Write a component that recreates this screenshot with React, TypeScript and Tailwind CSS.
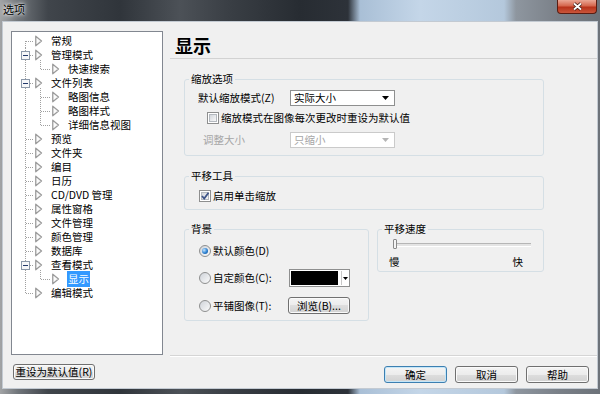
type Node = {
  label: string
  level: 0 | 1
  expand?: boolean
  first?: boolean
  last?: boolean
  lastChild?: boolean
  selected?: boolean
}

const nodes: Node[] = [
  { label: '常规', level: 0, first: true },
  { label: '管理模式', level: 0, expand: true },
  { label: '快速搜索', level: 1, lastChild: true },
  { label: '文件列表', level: 0, expand: true },
  { label: '略图信息', level: 1 },
  { label: '略图样式', level: 1 },
  { label: '详细信息视图', level: 1, lastChild: true },
  { label: '预览', level: 0 },
  { label: '文件夹', level: 0 },
  { label: '编目', level: 0 },
  { label: '日历', level: 0 },
  { label: 'CD/DVD 管理', level: 0 },
  { label: '属性窗格', level: 0 },
  { label: '文件管理', level: 0 },
  { label: '颜色管理', level: 0 },
  { label: '数据库', level: 0 },
  { label: '查看模式', level: 0, expand: true },
  { label: '显示', level: 1, lastChild: true, selected: true },
  { label: '编辑模式', level: 0, last: true },
]

const dot = { stroke: '#a0a0a0', strokeWidth: 1, strokeDasharray: '1 1' }

function Gutter({ n }: { n: Node }) {
  const w = n.level === 0 ? 39 : 56
  const tx = n.level === 0 ? 23 : 40
  return (
    <svg width={w} height={14} className="shrink-0">
      <line x1={13.5} x2={13.5} y1={n.first ? 7 : 0} y2={n.last ? 8 : 14} {...dot} />
      {n.level === 0 ? (
        <line x1={14} x2={22} y1={7.5} y2={7.5} {...dot} />
      ) : (
        <>
          <line x1={28.5} x2={28.5} y1={0} y2={n.lastChild ? 8 : 14} {...dot} />
          <line x1={29} x2={39} y1={7.5} y2={7.5} {...dot} />
        </>
      )}
      {n.expand && (
        <>
          <line x1={28.5} x2={28.5} y1={12} y2={14} {...dot} />
          <rect x={9.5} y={3.5} width={8} height={8} fill="#f6f7f9" stroke="#8b98a9" />
          <line x1={11} x2={16} y1={7.5} y2={7.5} stroke="#22386a" />
        </>
      )}
      <path
        d={`M${tx + 0.75} 2.25 L${tx + 0.75} 11.75 L${tx + 6.5} 7 Z`}
        fill="#fbfbfb"
        stroke="#9c9c9c"
        strokeWidth={1.3}
        strokeLinejoin="round"
      />
    </svg>
  )
}

function Tree() {
  return (
    <div className="h-[324px] w-[152px] border border-[#828790] bg-white pt-[2px]">
      {nodes.map((n) => (
        <div key={n.label} className="flex h-[14px] items-center">
          <Gutter n={n} />
          {n.selected ? (
            <span className="-ml-[1px] bg-[#3399ff] px-[1px] text-white">{n.label}</span>
          ) : (
            <span className="whitespace-nowrap">{n.label}</span>
          )}
        </div>
      ))}
    </div>
  )
}

function Group({ title, className, children }: { title: string; className?: string; children: React.ReactNode }) {
  return (
    <fieldset className={`rounded-[3px] border border-[#d5dfe5] ${className ?? ''}`}>
      <legend className="ml-[4px] px-[2px] leading-[14px]">{title}</legend>
      {children}
    </fieldset>
  )
}

function Combo({ value, disabled }: { value: string; disabled?: boolean }) {
  return (
    <div
      className={`flex h-[16px] w-[105px] items-center border bg-white pl-[3px] pr-[5px] ${
        disabled ? 'border-[#cacaca] text-[#a6a6a6]' : 'border-[#8e8f8f]'
      }`}
    >
      <span className="flex-1 leading-[14px]">{value}</span>
      <svg width="7" height="4">
        <path d="M0 0h7L3.5 4z" fill={disabled ? '#b5b5b5' : '#000'} />
      </svg>
    </div>
  )
}

function CheckBox({ checked }: { checked?: boolean }) {
  return (
    <span className="relative flex h-[12px] w-[12px] shrink-0 items-center justify-center border border-[#8e8f8f] bg-white">
      <span className="h-[8px] w-[8px] border border-[#b4b9bf] bg-gradient-to-br from-[#d3d7dd] to-[#f8f8f8]" />
      {checked && (
        <svg width="10" height="10" className="absolute left-[0px] top-[0px]">
          <path d="M2 5 L4.2 7.5 L8.5 1.8" fill="none" stroke="#3d5488" strokeWidth={1.8} />
        </svg>
      )}
    </span>
  )
}

function Radio({ checked }: { checked?: boolean }) {
  return (
    <span className="flex h-[12px] w-[12px] shrink-0 items-center justify-center rounded-full border border-[#8e8f8f] bg-gradient-to-br from-[#cfd3d9] to-[#fbfbfb]">
      {checked && (
        <span className="h-[6px] w-[6px] rounded-full bg-[radial-gradient(circle_at_35%_35%,#c6e6ff,#2a7fd0_55%,#164f8f)]" />
      )}
    </span>
  )
}

function Btn({ children, className, def }: { children: React.ReactNode; className?: string; def?: boolean }) {
  return (
    <div
      className={`flex items-center justify-center rounded-[3px] border bg-[linear-gradient(#f4f4f4_0%,#ececec_50%,#dedede_50%,#d2d2d2_100%)] leading-[14px] ${
        def ? 'border-[#3c7fb1] shadow-[inset_0_0_0_1px_#c4e6f8]' : 'border-[#707070] shadow-[inset_0_0_0_1px_#fafafa]'
      } ${className ?? ''}`}
    >
      {children}
    </div>
  )
}

export default function App() {
  return (
    <div className="flex h-[394px] w-[600px] flex-col overflow-hidden bg-[linear-gradient(90deg,#a2a4a6_0%,#70757a_3%,#40454b_8%,#30353b_20%,#4c5157_30%,#3a3f45_38%,#272c32_50%,#2d3239_58%,#a9bfd6_60%,#c4d6e8_70%,#b4c8dc_84%,#8e969f_86%,#7a8088_93%,#6c7279_100%)] font-['Noto_Sans_CJK_SC',sans-serif] text-[10.5px] text-black">
      {/* title bar */}
      <div className="flex h-[22px] shrink-0 items-start">
        <span className="pl-[3px] pt-[2px] text-[11px] leading-[14px] [text-shadow:0_0_6px_#ffffff,0_0_3px_#ffffff]">选项</span>
        <div className="ml-auto mr-[3px] flex h-[14px] w-[40px] items-center justify-center rounded-b-[4px] border border-t-0 border-[#5a1d12] bg-[linear-gradient(#eaa795_0%,#d5664d_45%,#b8321a_55%,#c9563b_100%)]">
          <svg width="11" height="9">
            <path d="M2 1.5 L9 7.5 M9 1.5 L2 7.5" stroke="#3b1b14" strokeWidth={3.4} />
            <path d="M2 1.5 L9 7.5 M9 1.5 L2 7.5" stroke="#ffffff" strokeWidth={1.8} />
          </svg>
        </div>
      </div>

      {/* client */}
      <div className="mx-[3px] flex h-[366px] shrink-0 flex-col bg-[#f0f0f0] shadow-[0_0_0_1px_#c3cad2]">
        <div className="flex h-[334px]">
          <div className="pl-[8px] pt-[9px]">
            <Tree />
          </div>

          <div className="ml-[7px] flex flex-1 flex-col border-b border-[#d5d5d5] shadow-[0_1px_0_#ffffff]">
            <div className="mt-[12px] h-[25px] border-b border-[#d2d2d2] pl-[5px] text-[18px] font-bold leading-[22px]">
              显示
            </div>

            <div className="ml-[14px] w-[360px]">
              <Group title="缩放选项" className="mt-[13px]">
                <div className="pb-[7px] pt-[4px]">
                  <div className="flex h-[16px] items-center pl-[13px]">
                    <span className="w-[92px] leading-[14px]">默认缩放模式(Z)</span>
                    <Combo value="实际大小" />
                  </div>
                  <div className="mt-[5px] flex h-[14px] items-center gap-[2px] pl-[22px]">
                    <CheckBox />
                    <span className="leading-[14px]">缩放模式在图像每次更改时重设为默认值</span>
                  </div>
                  <div className="mt-[7px] flex h-[16px] items-center pl-[18px]">
                    <span className="w-[87px] leading-[14px] text-[#a6a6a6]">调整大小</span>
                    <Combo value="只缩小" disabled />
                  </div>
                </div>
              </Group>

              <Group title="平移工具" className="mt-[13px]">
                <div className="pb-[6px] pt-[6px]">
                  <div className="flex h-[14px] items-center gap-[2px] pl-[14px]">
                    <CheckBox checked />
                    <span className="leading-[14px]">启用单击缩放</span>
                  </div>
                </div>
              </Group>

              <div className="mt-[12px] flex items-start gap-[8px]">
                <Group title="背景" className="w-[185px]">
                  <div className="pb-[6px] pt-[8px]">
                    <div className="flex h-[14px] items-center gap-[2px] pl-[14px]">
                      <Radio checked />
                      <span className="leading-[14px]">默认颜色(D)</span>
                    </div>
                    <div className="mt-[11px] flex h-[18px] items-center gap-[2px] pl-[14px]">
                      <Radio />
                      <span className="w-[74px] leading-[14px]">自定颜色(C):</span>
                      <div className="flex h-[18px] w-[61px] items-stretch border border-[#8e8f8f] bg-white p-[1px]">
                        <div className="w-[47px] bg-black" />
                        <div className="ml-[3px] w-[1px] bg-[#c8c8c8]" />
                        <div className="flex flex-1 items-center justify-center">
                          <svg width="5" height="3">
                            <path d="M0 0h5L2.5 3z" fill="#000" />
                          </svg>
                        </div>
                      </div>
                    </div>
                    <div className="mt-[10px] flex h-[17px] items-center gap-[2px] pl-[14px]">
                      <Radio />
                      <span className="w-[73px] leading-[14px]">平铺图像(T):</span>
                      <Btn className="h-[17px] w-[62px]">浏览(B)...</Btn>
                    </div>
                  </div>
                </Group>

                <Group title="平移速度" className="w-[167px]">
                  <div className="pb-[2px] pt-[3px]">
                    <div className="flex h-[10px] items-center pl-[15px]">
                      <div className="h-[10px] w-[4px] rounded-[1px] border border-[#8a8a8a] bg-[#f4f4f4]" />
                      <div className="h-[3px] w-[134px] border-t border-[#b6b6b6] bg-[#e4e4e4] shadow-[0_1px_0_#ffffff]" />
                    </div>
                    <div className="mt-[6px] flex h-[14px] items-center justify-between pl-[11px] pr-[20px] leading-[14px]">
                      <span>慢</span>
                      <span>快</span>
                    </div>
                  </div>
                </Group>
              </div>
            </div>
          </div>
        </div>

        <div className="flex flex-1 items-start">
          <Btn className="ml-[10px] mt-[8px] h-[16px] w-[82px]">重设为默认值(R)</Btn>
          <div className="ml-auto mr-[8px] mt-[10px] flex gap-[8px]">
            <Btn def className="h-[17px] w-[63px]">
              确定
            </Btn>
            <Btn className="h-[17px] w-[63px]">取消</Btn>
            <Btn className="h-[17px] w-[63px]">帮助</Btn>
          </div>
        </div>
      </div>
    </div>
  )
}
